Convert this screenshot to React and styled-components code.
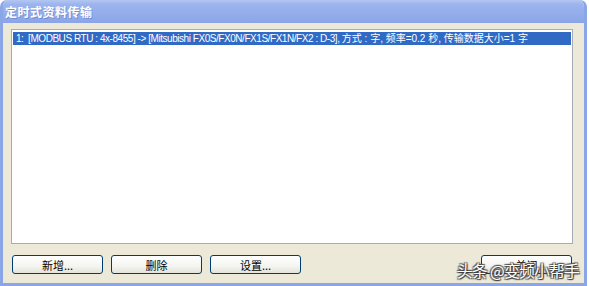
import React from 'react';
import styled, { createGlobalStyle } from 'styled-components';

const GlobalStyle = createGlobalStyle`
  html, body {
    margin: 0;
    padding: 0;
    background: #ffffff;
  }
  body {
    font-family: "Liberation Sans", "Noto Sans CJK SC", sans-serif;
  }
`;

// 定时式资料传输 对话框
const App = () => {
  return (
    <>
      <GlobalStyle />
      <Page>
        <Window>
          <TitleBar>
            <TitleText>定时式资料传输</TitleText>
          </TitleBar>

          <Body>
            {/* 传输列表 */}
            <ListBox>
              <ListRow selected>
                <Latin>1:&nbsp;&nbsp;[MODBUS RTU : 4x-8455] -&gt; [Mitsubishi FX0S/FX0N/FX1S/FX1N/FX2 : D-3], </Latin>
                <Cjk>方式 : 字, 频率=0.2 秒, 传输数据大小=1 字</Cjk>
              </ListRow>
            </ListBox>

            <ButtonRow>
              <LeftButtons>
                <Button>新增...</Button>
                <Button>删除</Button>
                <Button>设置...</Button>
              </LeftButtons>
              <Button>关闭</Button>
            </ButtonRow>
          </Body>
        </Window>

        {/* 水印 */}
        <Watermark>头条 @变频小帮手</Watermark>
      </Page>
    </>
  );
};

const Page = styled.div`
  position: relative;
  width: 589px;
  height: 286px;
  overflow: hidden;
`;

const Window = styled.div`
  width: 587px;
  height: 286px;
  box-sizing: border-box;
  display: flex;
  flex-direction: column;
  background-color: #ece9d8;
  border-left: 3px solid #8aa6e6;
  border-right: 3px solid #8aa6e6;
  border-bottom: 3px solid #8aa6e6;
  border-radius: 7px 7px 0 0;
  overflow: hidden;
`;

const TitleBar = styled.div`
  height: 23px;
  flex-shrink: 0;
  display: flex;
  align-items: center;
  padding-left: 5px;
  margin: 0 -3px;
  background: linear-gradient(
    to bottom,
    #b3c6f2 0%,
    #9bb4ee 20%,
    #94adeb 60%,
    #8aa4e6 100%
  );
`;

const TitleText = styled.div`
  font-family: "Noto Sans CJK SC", sans-serif;
  font-size: 12px;
  font-weight: 700;
  color: #ffffff;
  letter-spacing: 0.5px;
  text-shadow: 1px 1px 0 rgba(60, 80, 160, 0.35);
`;

const Body = styled.div`
  flex: 1;
  display: flex;
  flex-direction: column;
  padding: 6px 11px 9px 8px;
`;

const ListBox = styled.div`
  height: 215px;
  box-sizing: border-box;
  background: #ffffff;
  border: 1px solid #a5acb5;
  padding: 2px 1px;
`;

const ListRow = styled.div`
  height: 13px;
  line-height: 13px;
  padding-left: 3px;
  font-family: "Liberation Sans", "Noto Sans CJK SC", sans-serif;
  font-size: 10px;
  white-space: nowrap;
  overflow: hidden;
  color: ${({ selected }) => (selected ? '#ffffff' : '#000000')};
  background: ${({ selected }) => (selected ? '#316ac5' : 'transparent')};
`;

const Latin = styled.span`
  letter-spacing: -0.45px;
`;

const Cjk = styled.span`
  letter-spacing: 0;
`;

const ButtonRow = styled.div`
  display: flex;
  justify-content: space-between;
  margin-top: 11px;
  padding: 0 1px;
`;

const LeftButtons = styled.div`
  display: flex;
  gap: 8px;
`;

const Button = styled.div`
  width: 91px;
  height: 19px;
  box-sizing: border-box;
  display: flex;
  align-items: center;
  justify-content: center;
  border: 1px solid #003c74;
  border-radius: 3px;
  background: linear-gradient(to bottom, #ffffff 0%, #f4f4f0 60%, #e3e3db 100%);
  font-family: "Noto Sans CJK SC", sans-serif;
  font-size: 11px;
  color: #000000;
`;

const Watermark = styled.div`
  position: absolute;
  left: 457px;
  top: 259px;
  font-family: "Noto Sans CJK SC", sans-serif;
  font-size: 15.5px;
  color: #ffffff;
  letter-spacing: -0.5px;
  text-shadow:
    1px 1px 1px #333,
    -1px -1px 1px #555,
    1px -1px 1px #555,
    -1px 1px 1px #555;
`;

export default App;
